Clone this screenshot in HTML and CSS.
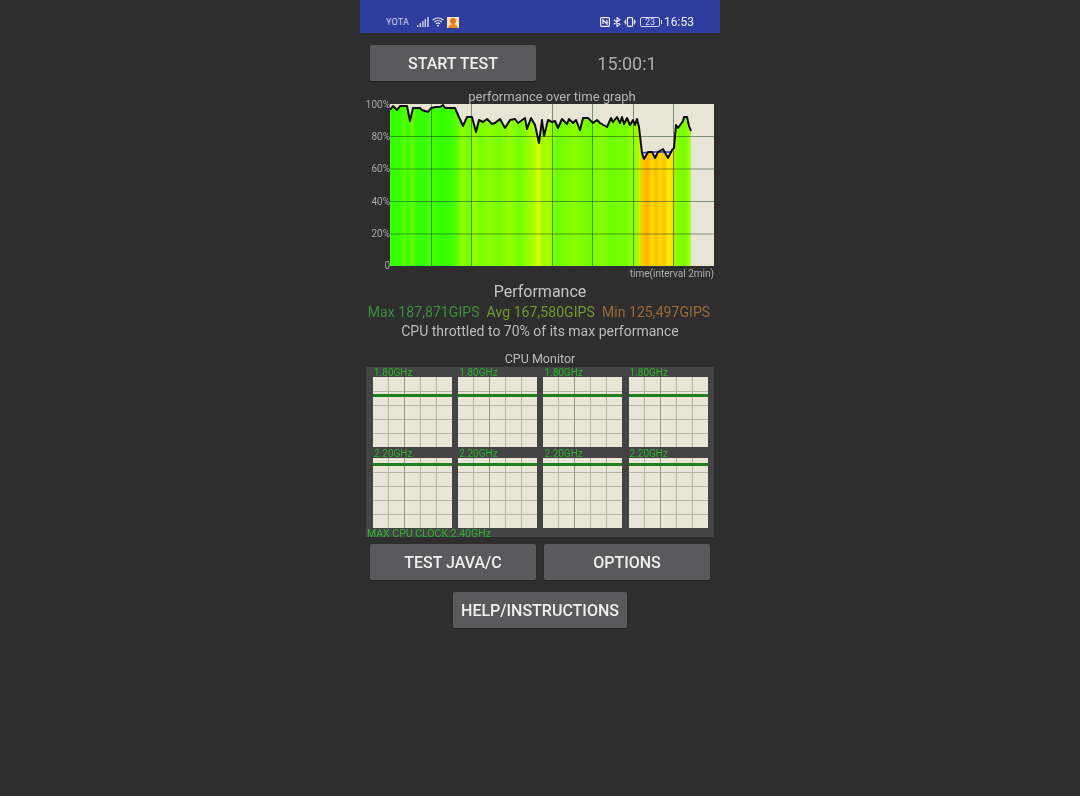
FILE: index.html
```html
<!DOCTYPE html>
<html lang="en">
<head>
<meta charset="utf-8">
<title>CPU Throttling Test</title>
<link rel="stylesheet" href="styles.css">
</head>
<body>
<main class="phone">
  <header class="status">
    <div class="status-left">
      <span class="carrier">YOTA</span>
      <svg class="ico-signal" viewBox="0 0 12 10" width="12" height="10"><path d="M0 8h1.4v2H0zM2.6 6h1.4v4H2.6zM5.2 4h1.4v6H5.2zM7.6 2H9v8H7.6zM10.2 0h1.5v10h-1.5z" fill="#cfd3ea"/></svg>
      <svg class="ico-wifi" viewBox="0 0 12 10" width="12" height="10" fill="none" stroke="#e6e8f4" stroke-width="1.1"><path d="M.5 3.2C3.6.2 8.4.2 11.5 3.2M2.3 5C4.4 3 7.6 3 9.7 5M4 6.8c1.1-1 2.9-1 4 0"/><circle cx="6" cy="8.7" r=".9" fill="#e6e8f4" stroke="none"/></svg>
      <svg class="ico-app" viewBox="0 0 12 11" width="12" height="11"><rect width="12" height="11" fill="#f9e3b8"/><circle cx="6" cy="4" r="3" fill="#e8711c"/><path d="M1 11c.6-3 2.6-4 5-4s4.400 1 5 4z" fill="#ef8a24"/></svg>
    </div>
    <div class="status-right">
      <svg class="ico-nfc" viewBox="0 0 10 10" width="10" height="10" fill="none" stroke="#eef0f8" stroke-width="1.200"><rect x=".6" y=".6" width="8.800" height="8.800" rx="1"/><path d="M3 7V3l4 4V3"/></svg>
      <svg class="ico-bt" viewBox="0 0 8 10" width="8" height="10" fill="none" stroke="#eef0f8" stroke-width="1.100"><path d="M.8 2.800l6 4.400L4 9.500V.5l2.800 2.300-6 4.400"/></svg>
      <svg class="ico-vib" viewBox="0 0 12 10" width="12" height="10" fill="none" stroke="#eef0f8" stroke-width="1.100"><rect x="3.500" y=".6" width="5" height="8.800" rx=".8"/><path d="M1.700 2.500v5M10.300 2.500v5M0 3.800v2.400M12 3.800v2.400"/></svg>
      <span class="battery"><span class="battery-level">23</span></span>
      <span class="clock">16:53</span>
    </div>
  </header>

  <section class="top-row">
    <button class="btn btn-half">START TEST</button>
    <span class="timer">15:00:1</span>
  </section>

  <section class="graph">
    <p class="graph-title">performance over time graph</p>
    <div class="graph-body">
      <div class="y-axis"><span>100%</span><span>80%</span><span>60%</span><span>40%</span><span>20%</span><span>0</span></div>
      <svg class="plot" viewBox="390 104 324 162" width="324" height="162">
        <defs>
          <linearGradient id="heat" gradientUnits="userSpaceOnUse" x1="390" y1="0" x2="691" y2="0">
            <stop offset="0" stop-color="#50ff00"/><stop offset=".01" stop-color="#30ff00"/><stop offset=".033" stop-color="#3cff00"/><stop offset=".05" stop-color="#58ff00"/><stop offset=".06" stop-color="#34ff00"/><stop offset=".073" stop-color="#66ff00"/><stop offset=".086" stop-color="#3cff00"/><stop offset=".116" stop-color="#34ff00"/><stop offset=".133" stop-color="#48ff00"/><stop offset=".166" stop-color="#34ff00"/><stop offset=".2" stop-color="#3cff00"/><stop offset=".22" stop-color="#58ff00"/><stop offset=".24" stop-color="#8cff00"/><stop offset=".266" stop-color="#70ff00"/><stop offset=".28" stop-color="#99ff00"/><stop offset=".3" stop-color="#77ff00"/><stop offset=".33" stop-color="#8cff00"/><stop offset=".365" stop-color="#77ff00"/><stop offset=".4" stop-color="#99ff00"/><stop offset=".43" stop-color="#70ff00"/><stop offset=".46" stop-color="#99ff00"/><stop offset=".48" stop-color="#aaff00"/><stop offset=".495" stop-color="#e4ff00"/><stop offset=".505" stop-color="#99ff00"/><stop offset=".525" stop-color="#b0ff00"/><stop offset=".55" stop-color="#70ff00"/><stop offset=".58" stop-color="#77ff00"/><stop offset=".615" stop-color="#88ff00"/><stop offset=".665" stop-color="#70ff00"/><stop offset=".7" stop-color="#88ff00"/><stop offset=".73" stop-color="#70ff00"/><stop offset=".78" stop-color="#77ff00"/><stop offset=".82" stop-color="#99ff00"/><stop offset=".83" stop-color="#ccee00"/><stop offset=".838" stop-color="#ffc800"/><stop offset=".857" stop-color="#ffb400"/><stop offset=".87" stop-color="#ffdd00"/><stop offset=".884" stop-color="#ffbb00"/><stop offset=".897" stop-color="#ffe000"/><stop offset=".91" stop-color="#ffc000"/><stop offset=".924" stop-color="#ffee00"/><stop offset=".937" stop-color="#ffdd00"/><stop offset=".944" stop-color="#aaee00"/><stop offset=".957" stop-color="#88ff00"/><stop offset=".98" stop-color="#77ff00"/><stop offset="1" stop-color="#b4ff20"/>
          </linearGradient>
        </defs>
        <rect x="390" y="104" width="324" height="162" fill="#e8e5d7"/>
        <polygon fill="url(#heat)" points="390,266 390,110 393,106 397,110 400,106 407,106 410,121 413,108 420,108 422,110 428,112 431,108 436,107 440,107 443,105 445,108 450,108 455,108 458,115 463,126 467,117 472,117 476,132 479,120 483,122 487,119 492,124 495,123 500,119 505,128 510,120 515,119 518,123 525,118 527,129 531,118 535,125 539,143 542,120 544,136 548,120 552,122 555,121 558,128 562,119 567,124 569,119 573,123 576,120 580,130 583,118 588,118 593,123 597,120 600,123 607,127 611,118 613,122 617,117 620,123 622,117 624,124 627,118 630,125 633,120 635,125 637,119 639,127 642,153 644,159 648,152 652,152 655,158 658,152 663,149 668,158 672,150 674,148 676,125 678,128 683,121 684,117 687,117 689,126 691,131 691,266"/>
        <path class="grid-lines" d="M390 136.500H714M390 169H714M390 201.500H714M390 234H714M431.500 104V266M471.500 104V266M552.500 104V266M592.500 104V266M633.500 104V266M673.500 104V266"/>
        <path class="avg-line" d="M642 153L650 152 660 152 672 152"/>
        <polyline class="perf-line" points="390,110 393,106 397,110 400,106 407,106 410,121 413,108 420,108 422,110 428,112 431,108 436,107 440,107 443,105 445,108 450,108 455,108 458,115 463,126 467,117 472,117 476,132 479,120 483,122 487,119 492,124 495,123 500,119 505,128 510,120 515,119 518,123 525,118 527,129 531,118 535,125 539,143 542,120 544,136 548,120 552,122 555,121 558,128 562,119 567,124 569,119 573,123 576,120 580,130 583,118 588,118 593,123 597,120 600,123 607,127 611,118 613,122 617,117 620,123 622,117 624,124 627,118 630,125 633,120 635,125 637,119 639,127 642,153 644,159 648,152 652,152 655,158 658,152 663,149 668,158 672,150 674,148 676,125 678,128 683,121 684,117 687,117 689,126 691,131"/>
      </svg>
    </div>
    <p class="graph-caption">time(interval 2min)</p>
  </section>

  <section class="summary">
    <h2 class="summary-title">Performance</h2>
    <p class="summary-stats"><span class="s-max">Max 187,871GIPS</span><span class="s-avg">Avg 167,580GIPS</span><span class="s-min">Min 125,497GIPS</span></p>
    <p class="summary-note">CPU throttled to 70% of its max performance</p>
  </section>

  <section class="monitor">
    <h3 class="monitor-title">CPU Monitor</h3>
    <div class="monitor-panel">
      <div class="cores">
        <div class="core core-a"><span class="freq">1.80GHz</span><div class="chart"></div></div>
        <div class="core core-a"><span class="freq">1.80GHz</span><div class="chart"></div></div>
        <div class="core core-a"><span class="freq">1.80GHz</span><div class="chart"></div></div>
        <div class="core core-a"><span class="freq">1.80GHz</span><div class="chart"></div></div>
        <div class="core core-b"><span class="freq">2.20GHz</span><div class="chart"></div></div>
        <div class="core core-b"><span class="freq">2.20GHz</span><div class="chart"></div></div>
        <div class="core core-b"><span class="freq">2.20GHz</span><div class="chart"></div></div>
        <div class="core core-b"><span class="freq">2.20GHz</span><div class="chart"></div></div>
      </div>
      <p class="max-clock">MAX CPU CLOCK:2.40GHz</p>
    </div>
  </section>

  <section class="actions">
    <div class="actions-row">
      <button class="btn btn-half">TEST JAVA/C</button>
      <button class="btn btn-half">OPTIONS</button>
    </div>
    <button class="btn btn-help">HELP/INSTRUCTIONS</button>
  </section>
</main>
</body>
</html>
```

FILE: styles.css
```css
* { box-sizing: border-box; }
html, body { margin: 0; padding: 0; }
body {
  background: #2e2e2e;
  font-family: Roboto, "Liberation Sans", sans-serif;
  height: 796px;
  overflow: hidden;
}
p, h2, h3 { margin: 0; font-weight: 400; }

.phone { width: 360px; margin: 0 auto; display: flex; flex-direction: column; filter: blur(.35px); }

.status {
  height: 33px;
  background: #2e3d9e;
  display: flex;
  justify-content: space-between;
  align-items: flex-end;
  padding: 0 26px 4px 26px;
  color: #eef0f8;
}
.status-left, .status-right { display: flex; align-items: center; height: 14px; }
.carrier { font-size: 9px; color: #cfd3ea; margin-right: 8px; letter-spacing: .2px; }
.ico-wifi { margin-left: 3px; }
.ico-app { margin-left: 3px; }
.ico-bt { margin-left: 3px; }
.ico-vib { margin-left: 3px; }
.battery {
  margin-left: 4px;
  width: 20px;
  height: 10px;
  border: 1px solid #d5d8ec;
  border-radius: 2px;
  display: flex;
  align-items: center;
  justify-content: center;
  position: relative;
}
.battery::after {
  content: "";
  position: absolute;
  right: -3px;
  top: 2px;
  width: 1px;
  height: 4px;
  background: #d5d8ec;
}
.battery-level { font-size: 9px; color: #d5d8ec; line-height: 8px; }
.clock { font-size: 12px; margin-left: 4px; line-height: 14px; }

.btn {
  border: 0;
  background: #5a5a5c;
  color: #efefef;
  font-family: Roboto, "Liberation Sans", sans-serif;
  font-weight: 500;
  font-size: 16px;
  height: 36px;
  padding: 0;
  border-radius: 2px;
  box-shadow: 0 1px 1px rgba(0,0,0,.3);
}
.btn-half { width: 166px; }
.btn-help { width: 174px; }

.top-row { display: flex; align-items: center; padding: 12px 0 0 10px; }
.timer { width: 182px; text-align: center; font-size: 18px; color: #adadad; }

.graph { position: relative; margin-top: 9px; height: 191px; }
.graph-title { font-size: 13px; line-height: 14px; color: #b5b5b5; text-align: center; padding-left: 24px; }
.graph-body { display: flex; height: 162px; }
.y-axis {
  width: 30px;
  height: 173px;
  margin-top: -5px;
  display: flex;
  flex-direction: column;
  justify-content: space-between;
  align-items: flex-end;
  font-size: 10px;
  line-height: 12px;
  color: #a9a9a9;
}
.plot { display: block; }
.grid-lines { stroke: rgba(20,60,20,.5); stroke-width: 1; fill: none; }
.avg-line { stroke: #2a35c8; stroke-width: 1.500; fill: none; }
.perf-line { stroke: #0c0c0c; stroke-width: 2; fill: none; stroke-linejoin: round; }
.graph-caption { font-size: 10px; line-height: 14px; padding-top: 1px; color: #b0b0b0; text-align: right; padding-right: 6px; }

.summary { text-align: center; margin-top: 1px; }
.summary-title { font-size: 16px; line-height: 20px; color: #c4c4c4; }
.summary-stats { display: flex; justify-content: center; gap: 7px; font-size: 14px; line-height: 20px; letter-spacing: .07px; padding-right: 2px; }
.s-max { color: #3c8f3c; }
.s-avg { color: #6f9a2e; }
.s-min { color: #9a6a3a; }
.summary-note { font-size: 14px; line-height: 20px; margin-top: -1px; color: #bcbcbc; }

.monitor { margin-top: 11px; padding: 0 6px; }
.monitor-title { font-size: 12.500px; line-height: 14px; color: #bcbcbc; text-align: center; }
.monitor-panel { margin-top: 1px; height: 170px; background: #444445; padding: 0 7px; position: relative; }
.cores {
  display: grid;
  grid-template-columns: repeat(4, 79px);
  column-gap: 6.200px;
  grid-template-rows: 80px 80px;
}
.core { position: relative; padding-top: 10px; }
.core-b { padding-top: 11px; }
.freq {
  position: absolute;
  left: 1px;
  top: 0;
  font-size: 10px;
  line-height: 12px;
  color: #2bb52b;
}
.core-b .freq { top: 1px; }
.chart {
  height: 70px;
  background-color: #e9e6d8;
  background-image:
    linear-gradient(to right, transparent 15px, #b5b4a6 15px, #b5b4a6 16px, transparent 16px, transparent 31px, #98978a 31px, #98978a 32px, transparent 32px, transparent 47px, #b5b4a6 47px, #b5b4a6 48px, transparent 48px, transparent 63px, #b5b4a6 63px, #b5b4a6 64px, transparent 64px),
    linear-gradient(to bottom, transparent 14px, #b5b4a6 14px, #b5b4a6 15px, transparent 15px, transparent 28px, #b5b4a6 28px, #b5b4a6 29px, transparent 29px, transparent 42px, #b5b4a6 42px, #b5b4a6 43px, transparent 43px, transparent 56px, #b5b4a6 56px, #b5b4a6 57px, transparent 57px);
  position: relative;
}
.chart::after {
  content: "";
  position: absolute;
  left: 0;
  right: 0;
  height: 3px;
  background: #1f7f1f;
}
.core-a .chart::after { top: 17px; }
.core-b .chart::after { top: 5px; }
.max-clock {
  position: absolute;
  left: 1px;
  bottom: -3px;
  font-size: 10.500px;
  line-height: 12px;
  color: #2bb52b;
}

.actions { display: flex; flex-direction: column; align-items: center; margin-top: 7px; gap: 12px; }
.actions-row { display: flex; gap: 8px; align-self: flex-start; padding-left: 10px; }
```
